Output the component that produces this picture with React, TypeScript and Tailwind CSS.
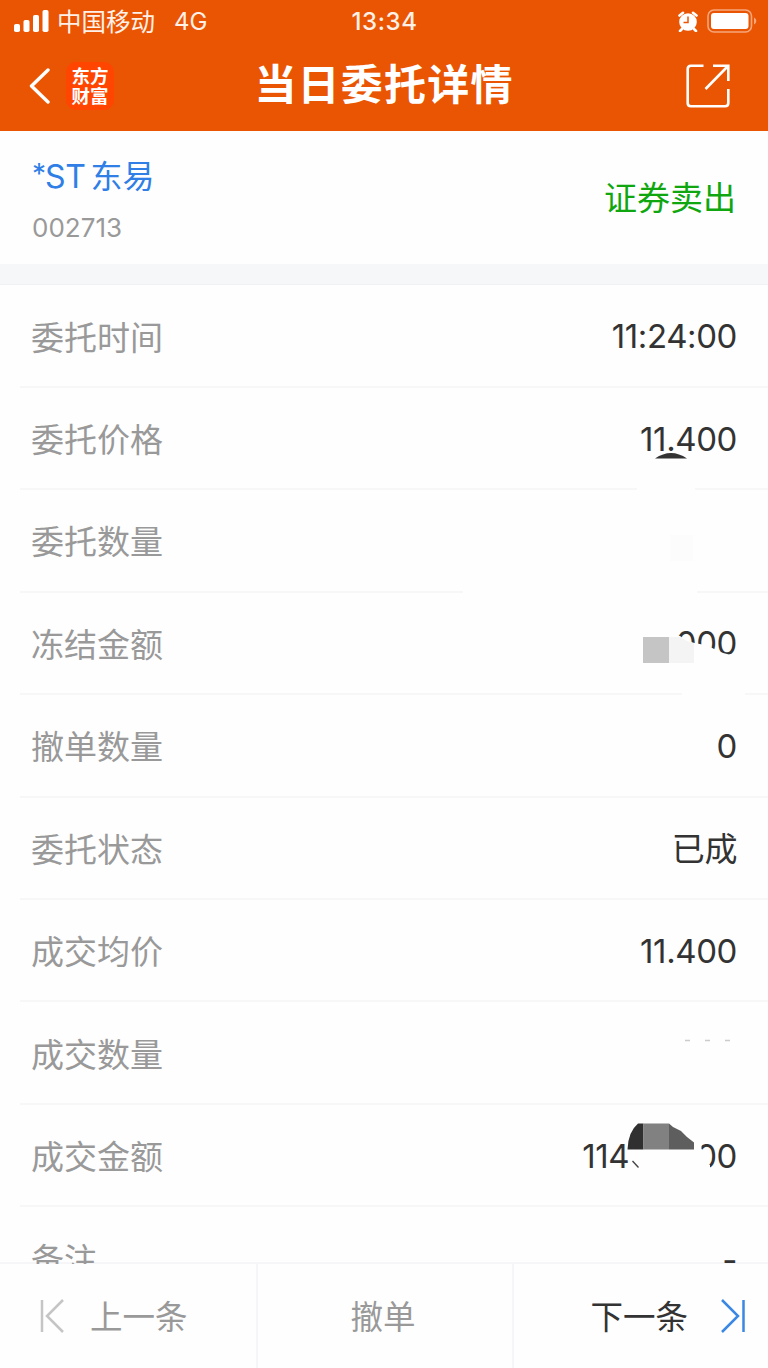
import React from "react";

// 委托詳情的每一列
const rows = [
  { label: "委托时间", value: "11:24:00" },
  { label: "委托价格", value: "11.400" },
  { label: "委托数量", value: "" },
  { label: "冻结金额", value: "000" },
  { label: "撤单数量", value: "0" },
  { label: "委托状态", value: "已成", className: "pt-[4px]" },
  { label: "成交均价", value: "11.400" },
  { label: "成交数量", value: "" },
  { label: "成交金额", value: "114", tail: "00" },
  { label: "备注", value: "-", className: "pt-[6px]" },
];

function StatusBar() {
  return (
    <div className="grid h-[42px] grid-cols-3 items-center pl-[14px] pr-[11px] text-[#fff1e8]">
      <div className="flex items-center">
        <svg className="h-[22px] w-[35px]" viewBox="0 0 35 22" fill="#fff">
          <rect x="0" y="14" width="6" height="8" rx="1.8" />
          <rect x="9.5" y="10" width="6" height="12" rx="1.8" />
          <rect x="19" y="5" width="6" height="17" rx="1.8" />
          <rect x="28.5" y="0" width="6" height="22" rx="1.8" />
        </svg>
        <span className="ml-[8px] whitespace-nowrap pt-[2px] text-[24.5px] leading-none">中国移动</span>
        <span className="ml-[19px] pt-[2px] text-[24px] leading-none">4G</span>
      </div>
      <div className="pr-[2px] pt-[2px] text-center text-[24px] font-medium leading-none tracking-[0.6px]">13:34</div>
      <div className="flex items-center justify-end gap-[9px]">
        <svg className="h-[21px] w-[20px]" viewBox="0 0 20 21">
          <circle cx="10" cy="11" r="8.8" fill="#fff" />
          <path d="M1.500 4.500L5 1.800M18.500 4.500L15 1.800M4 18l-2 2M16 18l2 2" fill="none" stroke="#fff" strokeWidth="2.6" strokeLinecap="round" />
          <path d="M10 5.5V11.5H5.5" fill="none" stroke="#ea5504" strokeWidth="1.5" />
        </svg>
        <svg className="h-[24px] w-[50px]" viewBox="0 0 50 24">
          <rect x="1" y="1" width="43.5" height="22" rx="6" fill="none" stroke="#f7a77c" strokeWidth="1.6" />
          <rect x="4" y="4" width="37.5" height="16" rx="3" fill="#fff" />
          <path d="M47 8.5v7c3-1.500 3-5.500 0-7z" fill="#f7a77c" />
        </svg>
      </div>
    </div>
  );
}

function TitleBar() {
  return (
    <div className="grid h-[88px] grid-cols-[220px_1fr_220px] items-center text-white">
      <div className="flex items-center pl-[29px]">
        <svg className="h-[36px] w-[22px]" viewBox="0 0 22 36" fill="none" stroke="#fff" strokeWidth="3.4" strokeLinecap="round" strokeLinejoin="round">
          <path d="M19 2L2.500 18L19 34" />
        </svg>
        <div className="ml-[15px] flex h-[48px] w-[48px] flex-col items-center justify-center rounded-[10px] bg-[#ff4500] pb-[2px] font-['Noto_Sans_CJK_SC',sans-serif] text-[18.500px] font-bold leading-[20.500px]">
          <span>东方</span>
          <span>财富</span>
        </div>
      </div>
      <h1 className="whitespace-nowrap pb-[2px] text-center text-[42px] font-bold leading-none tracking-[1.200px]">当日委托详情</h1>
      <div className="flex justify-end pr-[38px]">
        <svg className="h-[44px] w-[44px]" viewBox="0 0 44 44" fill="none" stroke="#fff" strokeWidth="2.6">
          <path d="M17.500 1.700H5Q1.700 1.700 1.700 5V39Q1.700 42.300 5 42.300H39Q42.300 42.300 42.300 39V25" />
          <path d="M27 1.700H42.300V17M42 2L19.500 25" />
        </svg>
      </div>
    </div>
  );
}

// 塗抹痕跡，覆蓋在列表上
function Scribbles() {
  return (
    <svg className="pointer-events-none absolute left-0 top-0 h-[979px] w-[768px]" viewBox="0 285 768 979">
      <g fill="#fefefe">
        <path d="M637 480H695V500H637zM463 580H697V602H463zM682 684H745V704H682z" />
        <path d="M640 636H680Q687 642 697 643.500Q708 645 716 650Q722 653 729 654.500L736 653L740 668H640z" />
        <path d="M690 1140H701.500V1149L707 1152V1163L710 1165V1174H690z" />
      </g>
      <path d="M655 458.500Q671 447.500 687 458.500z" fill="#333" />
      <path d="M643 637h26v26h-26z" fill="#c5c5c5" />
      <path d="M669 637h11q7 5 14 6v20h-25z" fill="#f4f4f4" />
      <path d="M670 535h23v26h-23z" fill="#fcfcfc" />
      <path d="M685 1040.500h5M705 1040.500h5M725 1040.500h5" stroke="#ccc" strokeWidth="1.500" />
      <path d="M643.500 1123.500H638Q628 1132 627.500 1149.500H643.500z" fill="#303030" />
      <path d="M643.500 1123.500H669V1149.500H643.500z" fill="#818181" />
      <path d="M669 1123.500L673 1127L681 1131L687 1137L694 1142.500V1149.500H669z" fill="#5e5e5e" />
      <path d="M632.500 1161L638.500 1167.500" stroke="#444" strokeWidth="1.400" />
    </svg>
  );
}

export default function App() {
  return (
    <main className="flex h-[1368px] w-[768px] flex-col overflow-hidden bg-[#fefefe] font-[Inter,'Noto_Sans_CJK_SC',sans-serif]">
      <header className="h-[130.500px] shrink-0 bg-[#ea5504]">
        <StatusBar />
        <TitleBar />
      </header>

      {/* 股票名稱 */}
      <section className="flex h-[133px] shrink-0 items-center justify-between px-[32px]">
        <div className="pt-[8px]">
          <div className="flex items-center leading-[44px] text-[#2f7fe6]">
            <span className="w-[13px] pb-[5px] text-[28px] leading-[39px]">*</span>
            <span className="text-[32px] tracking-[-0.3px]">ST</span>
            <span className="ml-[5px] text-[32px]">东易</span>
          </div>
          <div className="mt-[10px] text-[26px] leading-[38px] text-[#999]">002713</div>
        </div>
        <div className="pt-[2px] text-[33px] leading-none text-[#0fa60f]">证券卖出</div>
      </section>
      <div className="h-[21.500px] shrink-0 border-b border-[#f0f1f4] bg-[#f6f7f9]" />

      <section className="relative h-[979px] shrink-0 overflow-hidden pt-[0.400px]">
        {rows.map((row) => (
          <div key={row.label} className="ml-[20px] flex h-[102.450px] items-center justify-between border-b-2 border-[#f7f7f7] pl-[11px] pr-[31px] text-[33px] leading-none">
            <span className="pt-[5px] text-[#999]">{row.label}</span>
            <span className={`flex tracking-[-0.4px] text-[#333] ${row.className || "pt-[2px]"}`}>
              {row.value}
              {row.tail && <span className="ml-[67px]">{row.tail}</span>}
            </span>
          </div>
        ))}
        <Scribbles />
      </section>

      {/* 底部按鈕 */}
      <footer className="-mt-[2px] grid flex-1 grid-cols-3 border-t-2 border-[#f0f0f4]/60 text-[32.500px] leading-none text-[#999]">
        <button className="flex items-center pl-[40px]">
          <svg className="h-[34px] w-[25px]" viewBox="0 0 25 34" fill="none" stroke="#c5c5c5" strokeWidth="2.500">
            <path d="M2 1V33M23 1L7 17L23 33" />
          </svg>
          <span className="ml-[25px] pt-[4px]">上一条</span>
        </button>
        <button className="border-l-2 border-[#f6f6f8] pr-[4px] pt-[4px]">撤单</button>
        <button className="flex items-center justify-end border-l-2 border-[#f6f6f8] pr-[22px] text-[#333]">
          <span className="pt-[4px]">下一条</span>
          <svg className="ml-[32px] h-[34px] w-[26px]" viewBox="0 0 26 34" fill="none" stroke="#3a87e4" strokeWidth="2.500">
            <path d="M2 1L18 17L2 33M23.500 1V33" />
          </svg>
        </button>
      </footer>
    </main>
  );
}
